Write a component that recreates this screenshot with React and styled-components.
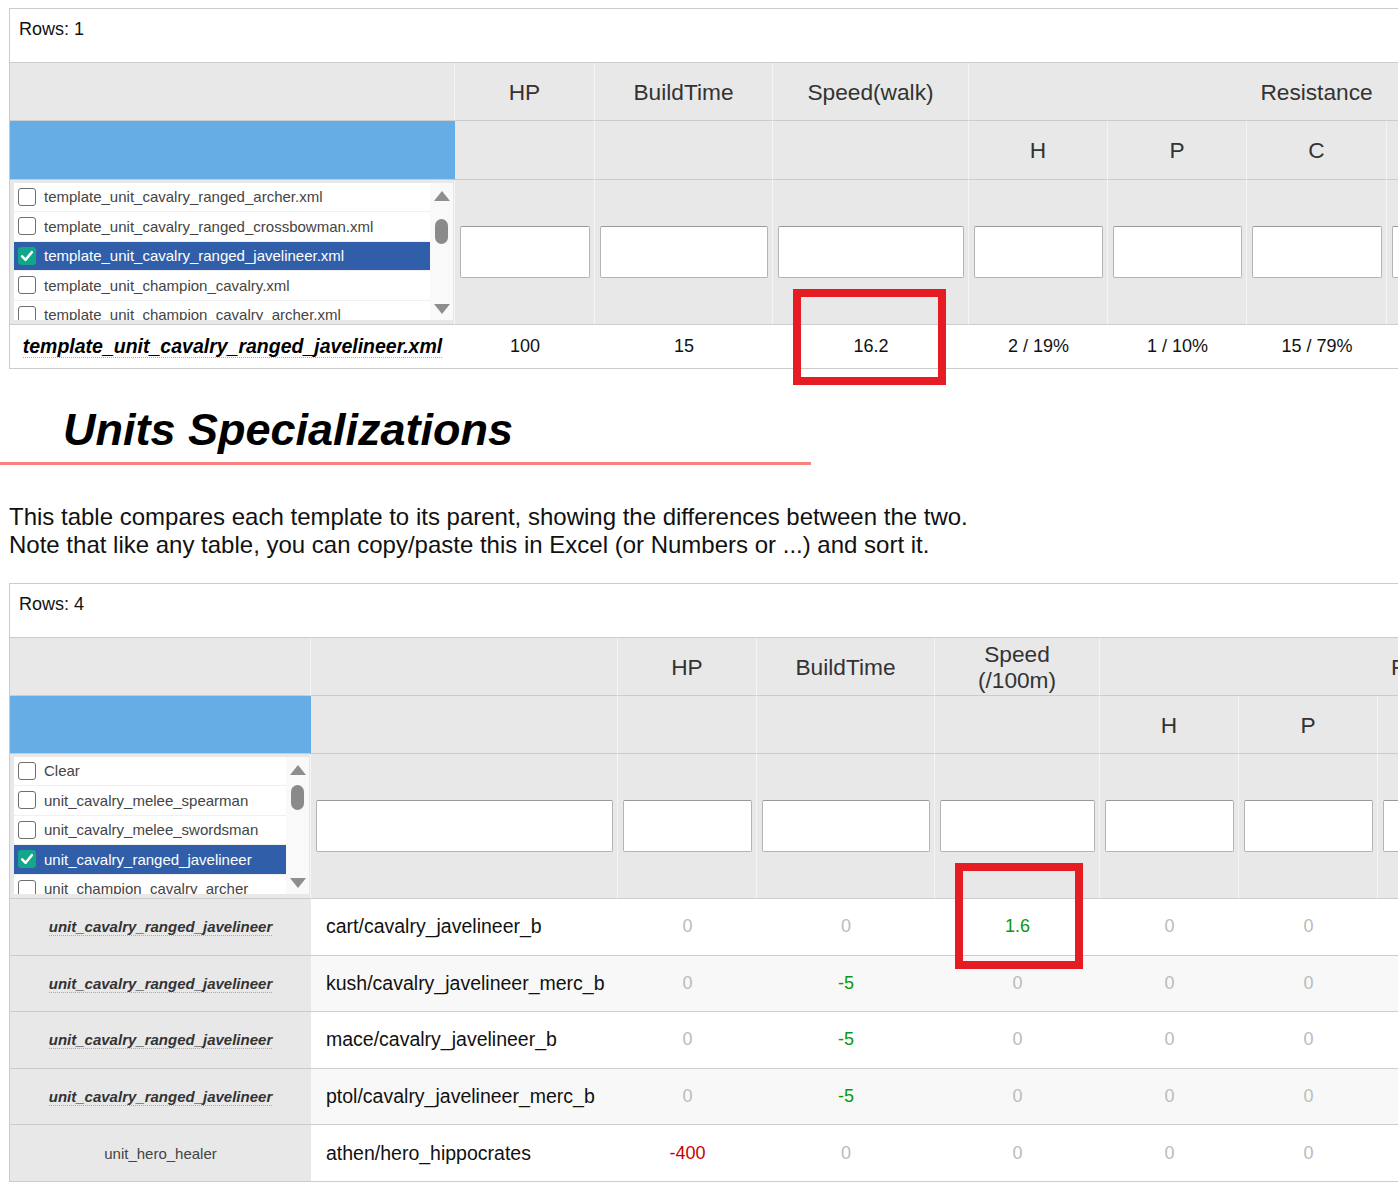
import React from "react";
import styled, { createGlobalStyle } from "styled-components";

const GlobalStyle = createGlobalStyle`
  html, body {
    margin: 0;
    padding: 0;
    overflow: hidden;
    background: #fff;
  }
  body {
    font-family: "Liberation Sans", Arial, sans-serif;
    color: #111;
  }
`;

const Page = styled.div`
  position: relative;
  padding-top: 8px;
`;

const TableFrame = styled.div`
  margin-left: 9px;
  margin-top: ${(p) => p.$gap || 0}px;
  width: max-content;
  border-top: 1px solid #ccc;
  border-left: 1px solid #ccc;
`;

const RowsBar = styled.div`
  box-sizing: border-box;
  height: 54px;
  padding: 10px 9px;
  font-size: 18px;
  line-height: 20px;
  color: #111;
  border-bottom: 1px solid #ccc;
`;

const Grid = styled.table`
  border-collapse: separate;
  border-spacing: 0;
  table-layout: fixed;
  font-family: inherit;
`;

const HeadCell = styled.th`
  box-sizing: border-box;
  height: ${(p) => p.$h || 58}px;
  padding: 0;
  background: ${(p) => (p.$accent ? "#66ade6" : "#e8e8e8")};
  border-right: 1px solid ${(p) => (p.$accent ? "#66ade6" : "#f4f4f4")};
  border-bottom: 1px solid #ccc;
  font-size: 22.7px;
  line-height: 26px;
  font-weight: normal;
  color: #333;
  text-align: center;
  vertical-align: middle;
  white-space: nowrap;
`;

const FilterCell = styled.td`
  box-sizing: border-box;
  height: 145px;
  padding: ${(p) => (p.$list ? "1px 1px 3px 4px" : "0 4px 0 5px")};
  background: #e8e8e8;
  border-right: 1px solid #f4f4f4;
  border-bottom: 1px solid #ccc;
  vertical-align: middle;
`;

const FilterInput = styled.input`
  display: block;
  box-sizing: border-box;
  width: 100%;
  height: 52px;
  margin: 0;
  border: 1px solid #b4b4b4;
  border-top-color: #999;
  border-radius: 2px;
  background: #fff;
`;

const ListBox = styled.div`
  display: flex;
  height: 137px;
  background: #f9f9f9;
  overflow: hidden;
`;

const ListItems = styled.div`
  flex: 1;
  overflow: hidden;
  background: #fff;
`;

const ListItem = styled.div`
  box-sizing: border-box;
  display: flex;
  align-items: center;
  gap: 8px;
  height: 29.5px;
  padding-left: 4px;
  border-bottom: 1px solid #f0f0f0;
  background: ${(p) => (p.$selected ? "#305ea8" : "#fff")};
  color: ${(p) => (p.$selected ? "#fff" : "#444")};
  font-size: 15px;
  white-space: nowrap;
`;

const Box = styled.span`
  box-sizing: border-box;
  flex: 0 0 18px;
  height: 18px;
  display: flex;
  align-items: center;
  justify-content: center;
  border-radius: 3px;
  border: ${(p) => (p.$checked ? "none" : "1.5px solid #6f6f6f")};
  background: ${(p) => (p.$checked ? "#12a68a" : "#fff")};
`;

const ScrollRail = styled.div`
  flex: 0 0 23px;
  display: flex;
  flex-direction: column;
  align-items: center;
  padding: 8px 0 6px;
  box-sizing: border-box;
`;

const Arrow = styled.span`
  width: 0;
  height: 0;
  border-left: 8px solid transparent;
  border-right: 8px solid transparent;
  ${(p) =>
    p.$down ? "border-top: 10px solid #8e8e8e;" : "border-bottom: 10px solid #8e8e8e;"}
  margin-top: ${(p) => (p.$down ? "auto" : "0")};
`;

const Thumb = styled.span`
  width: 13px;
  height: 25px;
  border-radius: 7px;
  background: #8a8a8a;
  margin-top: ${(p) => p.$offset}px;
`;

const DataCell = styled.td`
  box-sizing: border-box;
  height: ${(p) => p.$h}px;
  padding: ${(p) => (p.$left ? "0 0 0 15px" : "0")};
  background: ${(p) => (p.$head ? "#e8e8e8" : p.$alt ? "#f8f8f8" : "#fff")};
  border-bottom: 1px solid #ccc;
  text-align: ${(p) => (p.$left ? "left" : "center")};
  vertical-align: middle;
  font-size: ${(p) => p.$size || 18}px;
  color: ${(p) =>
    p.$kind === "zero"
      ? "#bbb"
      : p.$kind === "good"
      ? "#0a9a0a"
      : p.$kind === "bad"
      ? "#c80000"
      : "#111"};
  white-space: nowrap;
`;

const UnitRef = styled.span`
  font-weight: ${(p) => (p.$plain ? "normal" : "bold")};
  font-style: ${(p) => (p.$plain ? "normal" : "italic")};
  font-size: ${(p) => p.$size}px;
  color: ${(p) => p.$color};
  border-bottom: ${(p) => (p.$plain ? "none" : "1px dotted #aaa")};
`;

const Title = styled.h2`
  box-sizing: border-box;
  width: 811px;
  margin: 36px 0 0;
  padding: 0 0 7px 63px;
  font-size: 45px;
  line-height: 50px;
  font-weight: bold;
  font-style: italic;
  color: #000;
  border-bottom: 3px solid #f98282;
`;

const Intro = styled.p`
  margin: 38px 0 0 9px;
  font-size: 24px;
  line-height: 28px;
  color: #111;
`;

const Highlight = styled.div`
  position: absolute;
  box-sizing: border-box;
  left: ${(p) => p.$x}px;
  top: ${(p) => p.$y}px;
  width: ${(p) => p.$w}px;
  height: ${(p) => p.$h}px;
  border: 8px solid #e51d22;
  pointer-events: none;
`;

function Check() {
  return (
    <svg width="14" height="14" viewBox="0 0 14 14">
      <path
        d="M2.2 7.4 L5.6 10.8 L11.8 3.2"
        fill="none"
        stroke="#fff"
        strokeWidth="2.6"
        strokeLinecap="round"
        strokeLinejoin="round"
      />
    </svg>
  );
}

function Picker({ items, selected, thumb }) {
  return (
    <ListBox>
      <ListItems>
        {items.map((label) => (
          <ListItem key={label} $selected={label === selected}>
            <Box $checked={label === selected}>{label === selected && <Check />}</Box>
            {label}
          </ListItem>
        ))}
      </ListItems>
      <ScrollRail>
        <Arrow />
        <Thumb $offset={thumb} />
        <Arrow $down />
      </ScrollRail>
    </ListBox>
  );
}

const templateCols = [445, 140, 178, 196, 139, 139, 140, 139, 139];
const templateItems = [
  "template_unit_cavalry_ranged_archer.xml",
  "template_unit_cavalry_ranged_crossbowman.xml",
  "template_unit_cavalry_ranged_javelineer.xml",
  "template_unit_champion_cavalry.xml",
  "template_unit_champion_cavalry_archer.xml",
];

const specCols = [301, 307, 139, 178, 165, 139, 139, 139, 139, 139];
const specItems = [
  "Clear",
  "unit_cavalry_melee_spearman",
  "unit_cavalry_melee_swordsman",
  "unit_cavalry_ranged_javelineer",
  "unit_champion_cavalry_archer",
];

const specRows = [
  { parent: "unit_cavalry_ranged_javelineer", name: "cart/cavalry_javelineer_b", vals: ["0", "0", "1.6", "0", "0", "0", "0", "0"] },
  { parent: "unit_cavalry_ranged_javelineer", name: "kush/cavalry_javelineer_merc_b", vals: ["0", "-5", "0", "0", "0", "0", "0", "0"] },
  { parent: "unit_cavalry_ranged_javelineer", name: "mace/cavalry_javelineer_b", vals: ["0", "-5", "0", "0", "0", "0", "0", "0"] },
  { parent: "unit_cavalry_ranged_javelineer", name: "ptol/cavalry_javelineer_merc_b", vals: ["0", "-5", "0", "0", "0", "0", "0", "0"] },
  { parent: "unit_hero_healer", name: "athen/hero_hippocrates", plain: true, vals: ["-400", "0", "0", "0", "0", "0", "0", "0"] },
];

// HP going down is bad, build time going down is good, speed going up is good
function kindOf(value, col) {
  if (value === "0") return "zero";
  const n = parseFloat(value);
  if (col === 1) return n < 0 ? "good" : "bad";
  return n > 0 ? "good" : "bad";
}

function TemplateTable() {
  return (
    <TableFrame>
      <RowsBar>Rows: 1</RowsBar>
      <Grid>
        <colgroup>
          {templateCols.map((w, i) => (
            <col key={i} style={{ width: w }} />
          ))}
        </colgroup>
        <thead>
          <tr>
            <HeadCell />
            <HeadCell>HP</HeadCell>
            <HeadCell>BuildTime</HeadCell>
            <HeadCell>Speed(walk)</HeadCell>
            <HeadCell colSpan={5}>Resistance</HeadCell>
          </tr>
          <tr>
            <HeadCell $accent $h={59} />
            <HeadCell $h={59} />
            <HeadCell $h={59} />
            <HeadCell $h={59} />
            <HeadCell $h={59}>H</HeadCell>
            <HeadCell $h={59}>P</HeadCell>
            <HeadCell $h={59}>C</HeadCell>
            <HeadCell $h={59}>F</HeadCell>
            <HeadCell $h={59}>S</HeadCell>
          </tr>
          <tr>
            <FilterCell $list>
              <Picker
                items={templateItems}
                selected="template_unit_cavalry_ranged_javelineer.xml"
                thumb={18}
              />
            </FilterCell>
            {templateCols.slice(1).map((w, i) => (
              <FilterCell key={i}>
                <FilterInput type="text" />
              </FilterCell>
            ))}
          </tr>
        </thead>
        <tbody>
          <tr>
            <DataCell $h={44}>
              <UnitRef $size={19.5} $color="#000">
                template_unit_cavalry_ranged_javelineer.xml
              </UnitRef>
            </DataCell>
            {["100", "15", "16.2", "2 / 19%", "1 / 10%", "15 / 79%", "0 / 0%", "0 / 0%"].map(
              (v, i) => (
                <DataCell key={i} $h={44}>
                  {v}
                </DataCell>
              )
            )}
          </tr>
        </tbody>
      </Grid>
    </TableFrame>
  );
}

function SpecTable() {
  return (
    <TableFrame $gap={24}>
      <RowsBar>Rows: 4</RowsBar>
      <Grid>
        <colgroup>
          {specCols.map((w, i) => (
            <col key={i} style={{ width: w }} />
          ))}
        </colgroup>
        <thead>
          <tr>
            <HeadCell />
            <HeadCell />
            <HeadCell>HP</HeadCell>
            <HeadCell>BuildTime</HeadCell>
            <HeadCell>
              Speed
              <br />
              (/100m)
            </HeadCell>
            <HeadCell colSpan={5}>Resistance</HeadCell>
          </tr>
          <tr>
            <HeadCell $accent />
            <HeadCell />
            <HeadCell />
            <HeadCell />
            <HeadCell />
            <HeadCell>H</HeadCell>
            <HeadCell>P</HeadCell>
            <HeadCell>C</HeadCell>
            <HeadCell>F</HeadCell>
            <HeadCell>S</HeadCell>
          </tr>
          <tr>
            <FilterCell $list>
              <Picker items={specItems} selected="unit_cavalry_ranged_javelineer" thumb={10} />
            </FilterCell>
            {specCols.slice(1).map((w, i) => (
              <FilterCell key={i}>
                <FilterInput type="text" />
              </FilterCell>
            ))}
          </tr>
        </thead>
        <tbody>
          {specRows.map((row, r) => (
            <tr key={row.name}>
              <DataCell $h={56.6} $head>
                <UnitRef
                  $size={15}
                  $color={row.plain ? "#444" : "#333"}
                  $plain={row.plain}
                >
                  {row.parent}
                </UnitRef>
              </DataCell>
              <DataCell $h={56.6} $left $size={19.5} $alt={r % 2 === 1}>
                {row.name}
              </DataCell>
              {row.vals.map((v, i) => (
                <DataCell key={i} $h={56.6} $alt={r % 2 === 1} $kind={kindOf(v, i)}>
                  {v}
                </DataCell>
              ))}
            </tr>
          ))}
        </tbody>
      </Grid>
    </TableFrame>
  );
}

export default function App() {
  return (
    <>
      <GlobalStyle />
      <Page>
        <TemplateTable />
        <Title>Units Specializations</Title>
        <Intro>
          This table compares each template to its parent, showing the differences between the two.
          <br />
          Note that like any table, you can copy/paste this in Excel (or Numbers or ...) and sort it.
        </Intro>
        <SpecTable />
        <Highlight $x={793} $y={289} $w={153} $h={96} />
        <Highlight $x={955} $y={863} $w={128} $h={106} />
      </Page>
    </>
  );
}
